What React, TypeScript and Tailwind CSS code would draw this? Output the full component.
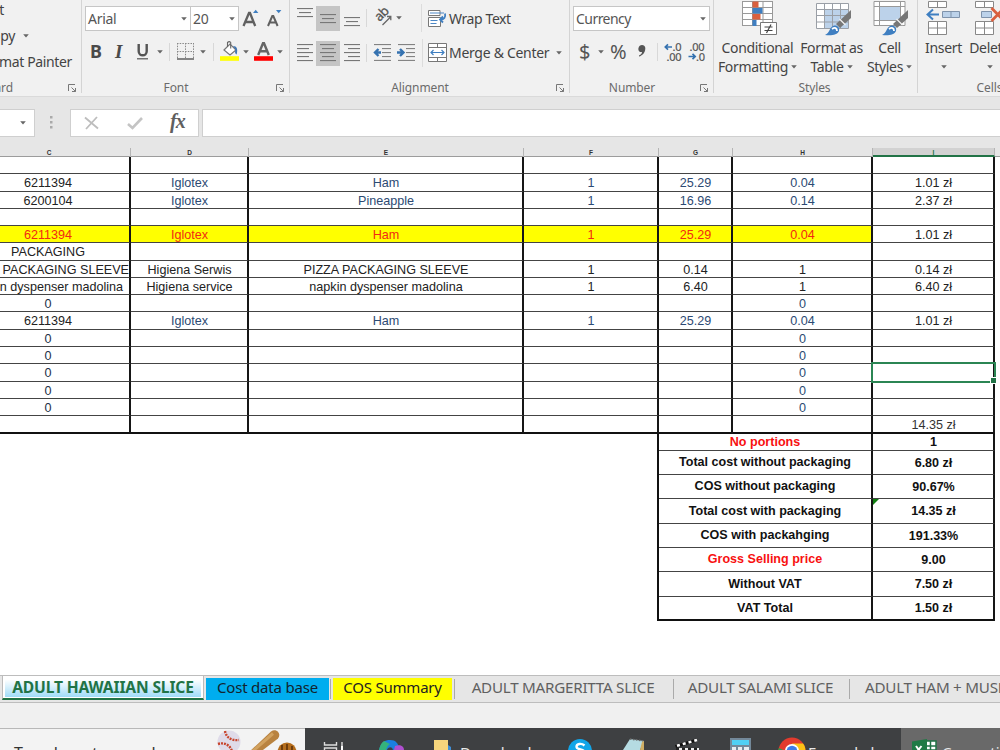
import type { ReactNode } from "react";
import clsx from "clsx";

type Row = {
  h: string;
  cells: string[];
  highlight?: boolean;
  plain?: boolean;
  selected?: boolean;
};

const ZERO = ["0", "", "", "", "", "0", ""];

const ROWS: Row[] = [
  { h: "h-[17px]", cells: ["", "", "", "", "", "", ""] },
  { h: "h-[18px]", cells: ["6211394", "Iglotex", "Ham", "1", "25.29", "0.04", "1.01 zł"] },
  { h: "h-[17px]", cells: ["6200104", "Iglotex", "Pineapple", "1", "16.96", "0.14", "2.37 zł"] },
  { h: "h-[17px]", cells: ["", "", "", "", "", "", ""] },
  { h: "h-[17px]", cells: ["6211394", "Iglotex", "Ham", "1", "25.29", "0.04", "1.01 zł"], highlight: true },
  { h: "h-[18px]", cells: ["PACKAGING", "", "", "", "", "", ""] },
  { h: "h-[17px]", cells: ["PIZZA PACKAGING SLEEVE", "Higiena Serwis", "PIZZA PACKAGING SLEEVE", "1", "0.14", "1", "0.14 zł"], plain: true },
  { h: "h-[17px]", cells: ["napkin dyspenser madolina", "Higiena service", "napkin dyspenser madolina", "1", "6.40", "1", "6.40 zł"], plain: true },
  { h: "h-[17px]", cells: ZERO },
  { h: "h-[18px]", cells: ["6211394", "Iglotex", "Ham", "1", "25.29", "0.04", "1.01 zł"] },
  { h: "h-[17px]", cells: ZERO },
  { h: "h-[17px]", cells: ZERO },
  { h: "h-[18px]", cells: ZERO, selected: true },
  { h: "h-[17px]", cells: ZERO },
  { h: "h-[17px]", cells: ZERO },
];

const COLS = [
  { name: "C", w: "w-[131px]" },
  { name: "D", w: "w-[118px]" },
  { name: "E", w: "w-[275px]" },
  { name: "F", w: "w-[135px]" },
  { name: "G", w: "w-[74px]" },
  { name: "H", w: "w-[140px]" },
  { name: "I", w: "w-[122px]" },
];

const SUMMARY = [
  { h: "h-[17px]", label: "No portions", value: "1", red: true },
  { h: "h-[24px]", label: "Total cost without packaging", value: "6.80 zł" },
  { h: "h-[24px]", label: "COS without packaging", value: "90.67%" },
  { h: "h-[25px]", label: "Total cost with packaging", value: "14.35 zł", flag: true },
  { h: "h-[24px]", label: "COS with packahging", value: "191.33%" },
  { h: "h-[24px]", label: "Gross Selling price", value: "9.00", red: true },
  { h: "h-[25px]", label: "Without VAT", value: "7.50 zł" },
  { h: "h-[24px]", label: "VAT Total", value: "1.50 zł" },
];

function Caret({ className }: { className?: string }) {
  return (
    <svg className={clsx("shrink-0", className)} width="6" height="4" viewBox="0 0 6 4">
      <path d="M.2.2h5.6L3 3.6z" fill="#666" />
    </svg>
  );
}

function Launcher() {
  return (
    <svg width="9" height="8" viewBox="0 0 9 8" fill="none" stroke="#777">
      <path d="M.5 7V.5H7M3.5 3.5l4 4M7.5 4v3.5H4" />
    </svg>
  );
}

function Sep({ className }: { className?: string }) {
  return <div className={clsx("w-px shrink-0", className)} />;
}

// Stack of text lines: each entry is [x, width] on a 4px pitch.
function Lines({ lines, className }: { lines: number[][]; className?: string }) {
  return (
    <svg className={clsx("shrink-0", className)} width="18" height="18" viewBox="0 0 18 18" fill="#777">
      {lines.map(([x, w], i) => (
        <rect key={i} x={x} y={i * 4} width={w} height="1.1" />
      ))}
    </svg>
  );
}

type GroupProps = { w: string; title: string; launcher?: boolean; titleClass?: string; children: ReactNode };

function Group({ w, title, launcher, titleClass = "justify-center", children }: GroupProps) {
  return (
    <div className={clsx("shrink-0 flex h-[96px] overflow-hidden", w)}>
      <div className="flex-1 min-w-0 flex flex-col">
        <div className="h-[79px] shrink-0">{children}</div>
        <div className="flex items-center h-[17px] text-[12px] text-[#6b6b6b] tracking-[-0.1px]">
          <span className={clsx("flex-1 min-w-0 flex", titleClass)}>{title}</span>
          {launcher && <span className="mr-[4px]"><Launcher /></span>}
        </div>
      </div>
      <div className="w-px h-[93px] bg-[#d4d4d4] shrink-0" />
    </div>
  );
}

function ClipboardGroup() {
  return (
    <Group w="w-[82px]" title="Clipboard" launcher titleClass="justify-end pr-[55px]">
      <div className="whitespace-nowrap text-[14px] text-[#444] tracking-[-0.35px]">
        <div className="h-[23px] flex justify-end pr-[77px] leading-[20px]">Cut</div>
        <div className="h-[26px] flex justify-end items-center pr-[52px] leading-[26px]">
          Copy <Caret className="ml-[8px]" />
        </div>
        <div className="h-[26px] flex justify-end pr-[9px] leading-[26px]">Format Painter</div>
      </div>
    </Group>
  );
}

function FontGroup() {
  return (
    <Group w="w-[208px]" title="Font" launcher titleClass="justify-center pr-[6px]">
      <div className="flex pt-[6px] pl-[3px] text-[14px] text-[#555] tracking-[-0.3px]">
        <div className="w-[106px] h-[25px] bg-white border border-[#c6c6c6] flex items-center pl-[2px] pr-[3px] justify-between">
          Arial <Caret />
        </div>
        <div className="w-[49px] -ml-px h-[25px] bg-white border border-[#c6c6c6] flex items-center pl-[2px] pr-[3px] justify-between">
          20 <Caret />
        </div>
        <svg width="44" height="24" viewBox="0 0 44 24" className="ml-[3px]" fill="none" stroke="#606060" strokeWidth="2.3">
          <path d="M1.5 20 7 7h1l5.200 13M3.800 16h7.200" />
          <path d="M26 20l4.300-10h1L35.600 20M28 16.500h5.800" strokeWidth="2" />
          <path d="M11 7l2.700-3.200L16.400 7z" fill="#3f7fc1" stroke="none" />
          <path d="M34 4h5.400l-2.700 3.200z" fill="#3f7fc1" stroke="none" />
        </svg>
      </div>
      <div className="flex items-center h-[26px] mt-[7px] pl-[8px] text-[#4a4a4a]">
        <span className="w-[13px] text-[18px] font-bold leading-none">B</span>
        <span className="w-[12px] ml-[12px] text-[19px] font-bold italic leading-none font-['Liberation_Serif',serif]">I</span>
        <svg width="14" height="18" viewBox="0 0 14 18" className="ml-[9px] mt-[1px]" fill="none" stroke="#555">
          <path d="M2.700 1v7.200c0 5.400 8 5.400 8 0V1" strokeWidth="2.400" />
          <path d="M1 15.800h11" strokeWidth="1.200" />
        </svg>
        <Caret className="ml-[7px] mt-[2px]" />
        <Sep className="ml-[6px] h-[18px] mt-[2px] bg-[#d8d8d8]" />
        <svg width="17" height="17" viewBox="0 0 17 17" className="ml-[7px] mt-[1px]" fill="none">
          <path d="M.5 0v15M8.500 0v15M16.500 0v15M0 .5h17M0 8.500h17" stroke="#888" strokeDasharray="1.500 1.200" />
          <path d="M0 16h17" stroke="#555" strokeWidth="1.400" />
        </svg>
        <Caret className="ml-[6px] mt-[2px]" />
        <Sep className="ml-[7px] h-[18px] mt-[2px] bg-[#d8d8d8]" />
        <svg width="20" height="20" viewBox="0 0 20 20" className="ml-[6px]" fill="none">
          <path d="M4 9l6-6 6 6-6 5z" fill="#fff" stroke="#777" strokeWidth="1.2" />
          <path d="M7.500 6V1.500q1.800-1.800 3.200 0V7.500" stroke="#666" strokeWidth="1.1" />
          <path d="M13 5c4 0 5 3 3.700 8.500-2.300-1-1.500-4-1.200-5z" fill="#3f76b5" />
          <path d="M0 15.200h19v4.600H0z" fill="#ff0" />
        </svg>
        <Caret className="ml-[3px] mt-[2px]" />
        <svg width="19" height="20" viewBox="0 0 19 20" className="ml-[5px]" fill="none">
          <path d="M4.200 14 9 2.300h1L14.800 14M6 10.300h7" stroke="#666" strokeWidth="2.4" />
          <path d="M0 15.200h19v4.600H0z" fill="#f00" />
        </svg>
        <Caret className="ml-[4px] mt-[2px]" />
      </div>
    </Group>
  );
}

function AlignmentGroup() {
  return (
    <Group w="w-[280px]" title="Alignment" launcher titleClass="justify-center pr-[6px]">
      <div className="flex items-center h-[26px] mt-[5px] pl-[6px] whitespace-nowrap text-[14px] text-[#444] tracking-[-0.4px]">
        <Lines lines={[[1, 16], [3, 12], [1, 16]]} className="-mt-[3px]" />
        <div className="w-[24px] h-[25px] bg-[#c5c5c5] ml-[2px] flex items-center justify-center">
          <Lines lines={[[1, 16], [3, 12], [1, 16]]} className="mt-[9px]" />
        </div>
        <Lines lines={[[1, 16], [3, 12], [1, 16]]} className="ml-[3px] mt-[15px]" />
        <Sep className="ml-[5px] h-[18px] bg-[#d8d8d8]" />
        <svg width="18" height="18" viewBox="0 0 18 18" className="ml-[8px] -mt-[2px] overflow-visible" fill="none" stroke="#666" strokeWidth="1.3">
          <text transform="translate(4.5 14) rotate(-45)" fontSize="13" fill="#555" stroke="#555" strokeWidth=".3" letterSpacing="-.5">ab</text>
          <path d="M7.500 17 15.500 9M12 8.500h3.800v3.800" />
        </svg>
        <Caret className="ml-[3px]" />
        <Sep className="ml-[19px] h-[28px] bg-[#dcdcdc]" />
        <svg width="19" height="19" viewBox="0 0 19 19" className="ml-[6px]" fill="none">
          <path d="M.5 1.500h11.500v5H.5zM.5 8.500h12v9H.5z" fill="#fff" stroke="#777" />
          <path d="M2 4h14M2.500 11.500h7M2.500 14.500h6" stroke="#4a86c5" strokeWidth="1.2" />
          <path d="M17 4.500c.8 4-.8 6-4.500 6M15 7.500l-3 3 3 3" stroke="#3f7fc1" strokeWidth="1.8" />
        </svg>
        <span className="ml-[2px]">Wrap Text</span>
      </div>
      <div className="flex items-center h-[26px] mt-[9px] pl-[6px] whitespace-nowrap text-[14px] text-[#444] tracking-[-0.29px]">
        <Lines lines={[[1, 16], [1, 12], [1, 16], [1, 12], [1, 16]]} />
        <div className="w-[24px] h-[25px] bg-[#c5c5c5] ml-[2px] flex items-center justify-center">
          <Lines lines={[[1, 16], [3, 12], [1, 16], [3, 12], [1, 16]]} />
        </div>
        <Lines lines={[[1, 16], [5, 12], [1, 16], [5, 12], [1, 16]]} className="ml-[3px]" />
        <Sep className="ml-[5px] h-[18px] bg-[#d8d8d8]" />
        <svg width="18" height="17" viewBox="0 0 18 17" className="ml-[6px] mt-[-2px]" fill="none">
          <path d="M1 .6h17M9 4.600h9M9 8.600h9M9 12.600h9M1 16.400h17" stroke="#777" />
          <path d="M8 8.500H3M5.500 5 2 8.500 5.500 12" stroke="#3572b0" strokeWidth="2.4" />
        </svg>
        <svg width="18" height="17" viewBox="0 0 18 17" className="ml-[6px] mt-[-2px]" fill="none">
          <path d="M1 .6h17M9 4.600h9M9 8.600h9M9 12.600h9M1 16.400h17" stroke="#777" />
          <path d="M0 8.500h6M3 5l3.500 3.500L3 12" stroke="#3572b0" strokeWidth="2.4" />
        </svg>
        <Sep className="ml-[7px] h-[28px] bg-[#dcdcdc]" />
        <svg width="19" height="19" viewBox="0 0 19 19" className="ml-[5px] mt-[-2px]" fill="none">
          <path d="M.5.5h18v18H.5z" fill="#fff" stroke="#777" />
          <path d="M.5 4.500h18M.5 14.500h18M9.500 0v4.500M9.500 14.500V19" stroke="#777" />
          <path d="M3 9.500h13M5.500 7 3 9.500 5.500 12M13.500 7 16 9.500 13.500 12" stroke="#3f7fc1" strokeWidth="1.2" />
        </svg>
        <span className="ml-[2px] mt-[-1px]">Merge &amp; Center</span>
        <Caret className="ml-[7px]" />
      </div>
    </Group>
  );
}

function NumberGroup() {
  return (
    <Group w="w-[144px]" title="Number" launcher titleClass="justify-center pr-[6px]">
      <div className="flex pt-[6px] pl-[3px] text-[14px] text-[#555] tracking-[-0.55px]">
        <div className="w-[137px] h-[25px] bg-white border border-[#c6c6c6] flex items-center pl-[2px] pr-[3px] justify-between">
          Currency <Caret />
        </div>
      </div>
      <div className="flex items-center h-[26px] mt-[8px] pl-[9px] text-[#555] text-[20px]">
        <span className="w-[12px]">$</span>
        <Caret className="ml-[7px]" />
        <span className="w-[17px] ml-[6px] tracking-[-1px]">%</span>
        <svg width="8" height="12" viewBox="0 0 8 12" className="ml-[11px] mt-[-2px]">
          <path d="M4 0a3.300 3.300 0 0 1 3.300 3.600C7.300 8 4 11 1 11.600v-1.200C3 9.500 4 8.500 4 7 .8 7.200 0 5.200.5 3 .9 1 2.300 0 4 0z" fill="#555" />
        </svg>
        <Sep className="ml-[11px] h-[18px] bg-[#d8d8d8]" />
        <svg width="42" height="20" viewBox="0 0 42 20" className="ml-[6px]">
          <g fill="#555" fontSize="11" letterSpacing="-.25" stroke="#555" strokeWidth=".2">
            <text x="8.5" y="9">.0</text>
            <text x="2.5" y="19">.00</text>
            <text x="25.5" y="9">.00</text>
            <text x="32" y="19">.0</text>
          </g>
          <path d="M8 5H1.500M4 2.300 1.300 5 4 7.700M24.500 14.500H31M28.500 11.800l2.700 2.700-2.700 2.700" fill="none" stroke="#3572b0" strokeWidth="1.7" />
        </svg>
      </div>
    </Group>
  );
}

function Big({ w, icon, a, b }: { w: string; icon: ReactNode; a: string; b?: string }) {
  return (
    <div className={clsx("shrink-0 flex flex-col items-center whitespace-nowrap text-[14px] leading-[19px] text-[#444] tracking-[-0.33px]", w)}>
      <div className="h-[38px]">{icon}</div>
      <span>{a}</span>
      <span className="flex items-center h-[19px]">
        {b} <Caret className={b ? "ml-[3px]" : ""} />
      </span>
    </div>
  );
}

function Brush() {
  return (
    <g>
      <path d="M35 10 20 24l4 4 11-10z" fill="#777" />
      <path d="M23.500 19l6 6" stroke="#f1f1f1" strokeWidth="1.2" />
      <path d="M9 35c5-2 4-7 8-9 4-1.500 7 1.500 6 5-1.500 4-8 5-14 4z" fill="#3f7fc1" />
      <path d="M16 29c3-2 5-1 5 2" stroke="#fff" strokeWidth="1.8" fill="none" />
    </g>
  );
}

function StylesGroup() {
  return (
    <Group w="w-[204px]" title="Styles" titleClass="justify-center pr-[2px]">
      <div className="flex">
        <Big
          w="w-[87px]"
          a="Conditional"
          b="Formatting"
          icon={
            <svg width="36" height="36" viewBox="0 0 36 36" className="ml-[2px]" fill="none">
              <path d="M1 1h31v25H1z" fill="#fff" />
              <path d="M1 1.500h31M1 7.500h31M1 13.500h31M1 19.500h31M1 25.500h19M1.500 1v25M11.500 1v25M22 1v21M31.500 1v25" stroke="#999" />
              <path d="M11.500 1.500h6v6h-6zM11.500 14h8v5.500h-8z" fill="#d9603f" />
              <path d="M11.500 8h10v5.500h-10zM11.500 20h4v6h-4z" fill="#3f7fc1" />
              <path d="M19.500 22.500h16v12h-16z" fill="#fff" stroke="#777" />
              <path d="M23.500 27h8M23.500 30.500h8M30 24.500l-4.500 8.500" stroke="#444" strokeWidth="1.2" />
            </svg>
          }
        />
        <Big
          w="w-[61px]"
          a="Format as"
          b="Table"
          icon={
            <svg width="36" height="36" viewBox="0 0 36 36" className="ml-[4px]" fill="none">
              <path d="M.5 3.500h32v25H.5z" fill="#fff" />
              <path d="M9 9.500h23v19H9z" fill="#bcd2ea" />
              <path d="M.5 3.500h32v25H.5zM.5 9.500h32M.5 15.500h32M.5 22h32M8.500 3v25M16.500 3v25M24.500 3v25" stroke="#9a9fa6" />
              <Brush />
            </svg>
          }
        />
        <Big
          w="w-[55px]"
          a="Cell"
          b="Styles"
          icon={
            <svg width="36" height="36" viewBox="0 0 36 36" className="ml-[2px]" fill="none">
              <path d="M1 1.500h31v24H1z" fill="#fff" stroke="#999" />
              <path d="M1 6.500h31M1 20.500h31M6.500 1v25M27.500 1v25" stroke="#999" />
              <path d="M7 7h20v13H7z" fill="#bcd2ea" />
              <Brush />
            </svg>
          }
        />
      </div>
    </Group>
  );
}

function CellsGroup() {
  return (
    <Group w="w-[144px]" title="Cells">
      <div className="flex">
        <Big
          w="w-[51px]"
          a="Insert"
          icon={
            <svg width="35" height="36" viewBox="0 0 35 36" fill="none">
              <path d="M2.500 1.500h18v6h-18zM2.500 21.500h18v13h-18z" fill="#fff" stroke="#888" />
              <path d="M11.500 1v6.500M11.500 21.500v13M2.500 28h18" stroke="#888" />
              <path d="M16.500 11.500h17v6h-17zM25 11.500v6" fill="#bcd2ea" stroke="#7f93ab" />
              <path d="M13 14.500H2M7 9.500l-5.500 5 5.500 5" stroke="#3f7fc1" strokeWidth="2" />
            </svg>
          }
        />
        <Big
          w="w-[41px]"
          a="Delete"
          icon={
            <svg width="32" height="36" viewBox="0 0 32 36" className="-ml-[2px]" fill="none">
              <path d="M2.500 1.500h18v6h-18zM2.500 21.500h18v13h-18z" fill="#fff" stroke="#888" />
              <path d="M11.500 1v6.500M11.500 21.500v13M2.500 28h18" stroke="#888" />
              <path d="M8.500 11.500h10v6h-10z" fill="#bcd2ea" stroke="#7f93ab" />
              <path d="M18.500 8 31 21M31 8 18.500 21" stroke="#d9603f" strokeWidth="2.8" />
            </svg>
          }
        />
      </div>
    </Group>
  );
}

function FormulaBar() {
  return (
    <div className="h-[51px] pt-[12px] flex items-start bg-[#e6e6e6] shrink-0">
      <div className="w-[35px] h-[28px] bg-white border border-l-0 border-[#cfcfcf] flex items-center justify-end pr-[8px]"><Caret /></div>
      <svg width="4" height="28" viewBox="0 0 4 28" className="ml-[15px]" fill="#aaa">
        <path d="M0 7h2.500v2.500H0zM0 12h2.500v2.500H0zM0 17h2.500v2.500H0z" />
      </svg>
      <div className="ml-[16px] w-[129px] h-[28px] bg-white border border-[#cfcfcf] flex items-center">
        <svg width="15" height="14" viewBox="0 0 15 14" className="ml-[13px]" fill="none" stroke="#bdbdbd" strokeWidth="1.8">
          <path d="M1 1.500 14 12.500M13 1 2 13" />
        </svg>
        <svg width="16" height="13" viewBox="0 0 16 13" className="ml-[28px]" fill="none" stroke="#c4c4c4" strokeWidth="2.6">
          <path d="M1 7l4.500 4L15 1" />
        </svg>
        <span className="ml-[27px] -mt-[4px] text-[20px] leading-none italic font-bold tracking-[-1px] text-[#5f5f5f] font-['Liberation_Serif',serif]">fx</span>
      </div>
      <div className="ml-[3px] flex-1 h-[28px] bg-white border border-r-0 border-[#cfcfcf]" />
    </div>
  );
}

function cellColor(row: Row, i: number) {
  if (row.highlight && i < 6) return "text-[#f22a12]";
  if (row.plain || i === 6) return "text-[#222]";
  if (i === 0) return row.cells[0] === "0" ? "text-[#233047]" : "text-[#222]";
  return "text-[#2c4a73]";
}

// Column C starts left of the window, so its text is centred further left.
function firstCellPad(row: Row) {
  if (row.cells[0].startsWith("PIZZA")) return "justify-end";
  if (row.plain) return "justify-end pr-[6px]";
  return "justify-center pr-[33px]";
}

function Sheet() {
  return (
    <div className="h-[527px] shrink-0 bg-white overflow-hidden font-['Liberation_Sans',Arial,sans-serif]">
      <div className="flex h-[9px] bg-[#e6e6e6] border-b border-[#9c9c9c] text-[6.5px] leading-[9px] font-bold text-[#333]">
        {COLS.map((c) => (
          <div
            key={c.name}
            className={clsx(
              "shrink-0 h-[9px] text-center border-r border-[#b5b5b5]",
              c.w,
              c.name === "C" && "pr-[32px]",
              c.name === "I" && "bg-[#d2d2d2] border-b-2 border-b-[#217346] text-[#217346]"
            )}
          >
            {c.name}
          </div>
        ))}
      </div>

      {ROWS.map((row, r) => (
        <div key={r} className={clsx("flex", row.h)}>
          {COLS.map((c, i) => (
            <div
              key={c.name}
              className={clsx(
                "shrink-0 relative flex items-center whitespace-nowrap border-r-2 border-r-[#161616] border-b border-b-[#444] text-[12.6px] leading-none",
                c.w,
                cellColor(row, i),
                i === 0 ? firstCellPad(row) : "justify-center pl-[1px]",
                row.highlight && i < 6 && "bg-[#ff0]"
              )}
            >
              <span className="pt-[2px]">{row.cells[i]}</span>
              {row.selected && i === 6 && (
                <div className="absolute z-10 -left-[2px] -right-[3px] -top-[2px] -bottom-[2px] border-2 border-[#2b8553]">
                  <div className="absolute -right-[2px] -bottom-[2px] w-[5px] h-[5px] bg-[#217346] outline outline-white" />
                </div>
              )}
            </div>
          ))}
        </div>
      ))}

      {/* last ruled row, closes the table */}
      <div className="flex h-[18px] text-[12.6px] leading-none text-[#333]">
        {COLS.map((c, i) => (
          <div key={c.name} className={clsx("shrink-0 flex items-center justify-center pl-[1px] border-r-2 border-r-[#161616] border-b-2 border-b-[#111]", c.w)}>
            <span className="pt-[3px]">{i === 6 ? "14.35 zł" : ""}</span>
          </div>
        ))}
      </div>

      <div className="ml-[657px] w-[338px] border-l-2 border-[#111] text-[12.55px] font-bold text-[#111] leading-none">
        {SUMMARY.map((s, i) => (
          <div key={s.label} className={clsx("flex", s.h)}>
            <div
              className={clsx(
                "w-[214px] flex items-center justify-center border-r-2 border-r-[#161616]",
                i === SUMMARY.length - 1 ? "border-b-2 border-b-[#111]" : "border-b border-b-[#444]",
                s.red && "text-[#f81010]"
              )}
            >
              {s.label}
            </div>
            <div
              className={clsx(
                "w-[122px] relative flex items-center justify-center pt-[1px] pl-[1px] border-r-2 border-r-[#161616]",
                i === SUMMARY.length - 1 ? "border-b-2 border-b-[#111]" : "border-b border-b-[#444]"
              )}
            >
              {s.flag && (
                <svg className="absolute left-0 top-0" width="6" height="6" viewBox="0 0 6 6">
                  <path d="M0 0h6L0 6z" fill="#128012" />
                </svg>
              )}
              {s.value}
            </div>
          </div>
        ))}
      </div>
    </div>
  );
}

function SheetTabs() {
  return (
    <div className="h-[28px] shrink-0 flex overflow-hidden bg-[#e6e6e6] border-t border-b border-[#bdbdbd] text-[15.2px] leading-[23px] whitespace-nowrap text-[#606060] tracking-[-0.25px]">
      <div className="shrink-0 ml-[2px] w-[202px] h-[25px] -mt-px bg-white border-l border-r border-[#bbb] border-b-2 border-b-[#217346] px-[2px]">
        <div className="h-[22px] bg-linear-to-b from-white from-20% to-[#9fdcf8] text-center text-[15.6px] leading-[24px] font-bold text-[#217346] tracking-[-0.15px]">ADULT HAWAIIAN SLICE</div>
      </div>
      <div className="shrink-0 ml-[2px] mt-[2px] w-[123px] h-[22px] bg-[#00adef] text-center text-[15px] text-[#12242e] tracking-[-0.2px] leading-[19px]">Cost data base</div>
      <Sep className="ml-[1px] mt-[3px] bg-[#aaa] h-[20px]" />
      <div className="shrink-0 ml-[2px] mt-[2px] w-[119px] h-[22px] bg-[#ff0] text-center text-[15px] text-[#222] tracking-[-0.2px] leading-[19px]">COS Summary</div>
      <Sep className="ml-[2px] mt-[3px] bg-[#aaa] h-[20px]" />
      <div className="shrink-0 w-[218px] text-center pr-[2px]">ADULT MARGERITTA SLICE</div>
      <Sep className="mt-[3px] bg-[#aaa] h-[20px]" />
      <div className="shrink-0 w-[175px] text-center pr-[2px]">ADULT SALAMI SLICE</div>
      <Sep className="mt-[3px] bg-[#aaa] h-[20px]" />
      <div className="shrink-0 pl-[15px]">ADULT HAM + MUSHROOM</div>
    </div>
  );
}

function Taskbar() {
  return (
    <div className="h-[22px] shrink-0 flex overflow-hidden bg-[#3e4042] text-[15px] text-[#e8e8e8] whitespace-nowrap">
      <div className="w-[305px] shrink-0 h-[22px] bg-[#f3f3f3] border-t border-[#b8b8b8] flex items-start">
        <span className="ml-[14px] mt-[12px] w-[202px] text-[16px] text-[#333]">Type here to search</span>
        <svg width="84" height="22" viewBox="0 0 84 22" fill="none">
          <circle cx="13" cy="13" r="11.5" fill="#dfdbe9" />
          <path d="M9 2c1 6 6 10 14 9M2 15c6-2 12 1 14 7" stroke="#c8442c" strokeWidth="2.4" strokeDasharray="2 1" />
          <path d="M32 24 55 2.500c5-4 11 2 7 7L43 24z" fill="#b98340" />
          <path d="M37 22 57 4.500" stroke="#d2a25f" strokeWidth="3" />
          <circle cx="71" cy="23" r="9.5" fill="#b56d1b" />
          <path d="M66 16v6M71 15v7M76 17v6" stroke="#6f3c0b" strokeWidth="2" />
        </svg>
      </div>
      <svg width="153" height="22" viewBox="0 0 153 22" fill="none" className="shrink-0">
        <path d="M19.500 14v3h12v-3M19.500 22v-2h12v2M37 14v4" stroke="#ddd" strokeWidth="1.4" />
        <path d="M36 18h2v4h-2z" fill="#fff" />
        <path d="M74 22c2-8 6-10 11-10 6 0 8 3 10 10h-7c-1-4-5-3-6 0z" fill="#1a7fe0" />
        <path d="M74 22c1-4 2-7 5-9l6 3c-2 1-3 3-4 6z" fill="#34b27c" />
        <path d="M90 18c5-2 9 0 9 4h-10z" fill="#b04fd0" />
        <path d="M129 12h14v10h-14z" fill="#f6d57c" />
        <path d="M143 22v-5l3 2v3z" fill="#3f8fd8" />
      </svg>
      <span className="w-[108px] shrink-0 ml-[2px] mt-[13px]">Downloads</span>
      <svg width="239" height="22" viewBox="0 0 239 22" fill="none" className="shrink-0">
        <circle cx="12" cy="23" r="12" fill="#12a5e8" />
        <path d="M16.500 17.500c-3-2.500-8-2-8 1.500 0 3 8 2 8 5" stroke="#fff" strokeWidth="2.4" />
        <path d="M62 11l14 2-4 9H55z" fill="#b5dbe2" />
        <path d="M62 11l14 2" stroke="#6a6a6a" strokeWidth="1.5" strokeDasharray="1.5 1.5" />
        <path d="M74 14l2-1v9h-4z" fill="#cfae64" />
        <path d="M107 17 129 10.500v3L108 20z" fill="#111" />
        <path d="M109 17.800 129 12" stroke="#fff" strokeWidth="2.5" strokeDasharray="3 3" />
        <path d="M108 20h23v2h-23z" fill="#eee" />
        <path d="M108 21h23" stroke="#222" strokeWidth="2.5" strokeDasharray="3 3" />
        <path d="M162 10h21v12h-21z" fill="#73899a" />
        <path d="M164 12h17v5h-17z" fill="#4fd0f4" />
        <path d="M164 19h4v3h-4zM170 19h4v3h-4zM176 19h5v3h-5z" fill="#e8edf0" />
        <circle cx="224" cy="23" r="13.5" fill="#e33b2e" />
        <path d="M237.500 23c0-3-1-6-2.500-7.500h-11l5 7.500z" fill="#fbc116" />
        <path d="M211 20l6 3h-7z" fill="#2aa14c" />
        <circle cx="224" cy="23" r="7" fill="#fff" />
        <circle cx="224" cy="23" r="5.3" fill="#3f7de8" />
      </svg>
      <span className="w-[93px] shrink-0 ml-[1px] mt-[13px]">Formula b</span>
      <div className="flex-1 bg-[#696969] flex">
        <svg width="28" height="22" viewBox="0 0 28 22" fill="none" className="ml-[10px] shrink-0">
          <path d="M14 13h11v9H14z" fill="#fff" stroke="#217346" strokeWidth="1.5" />
          <path d="M19.500 13v9M14 18h11" stroke="#217346" strokeWidth="1.5" />
          <path d="M1 13.500 16 11v11H1z" fill="#1f7a45" />
          <path d="M5 18l5 7M10.500 18 5 25" stroke="#fff" strokeWidth="2" />
        </svg>
        <span className="ml-[3px] mt-[13px]">Cosmetic</span>
      </div>
    </div>
  );
}

export default function App() {
  return (
    <div className="w-[1000px] h-[750px] overflow-hidden flex flex-col bg-[#f0f0f0] font-['Noto_Sans','Open_Sans',sans-serif]">
      <div className="h-[97px] shrink-0 flex overflow-hidden bg-[#f1f1f1] border-b border-[#dadada]">
        <ClipboardGroup />
        <FontGroup />
        <AlignmentGroup />
        <NumberGroup />
        <StylesGroup />
        <CellsGroup />
      </div>
      <FormulaBar />
      <Sheet />
      <SheetTabs />
      <div className="h-[25px] shrink-0 bg-[#f0f0f0]" />
      <Taskbar />
    </div>
  );
}
